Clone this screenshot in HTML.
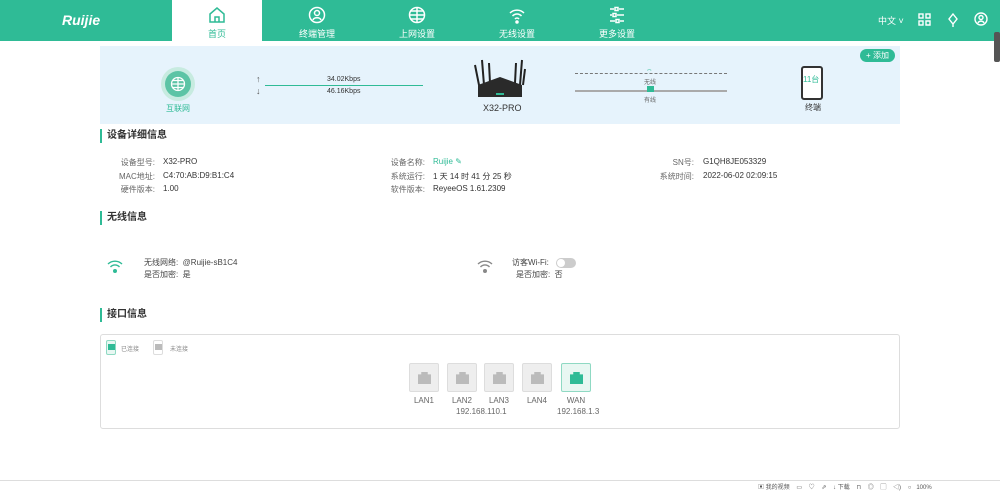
<!DOCTYPE html>
<html><head><meta charset="utf-8"><style>
*{margin:0;padding:0;box-sizing:border-box}
body{width:1000px;height:491px;overflow:hidden;background:#fff;font-family:"Liberation Sans","Noto Sans CJK SC",sans-serif;color:#333;position:relative;font-size:8px}
.a{position:absolute;white-space:nowrap}
.hdr{position:absolute;left:0;top:0;width:1000px;height:41px;background:#2fbb96}
.nav{position:absolute;top:0;width:90px;height:41px;color:#fff;text-align:center}
.nav.on{background:#fff;color:#2fbb96}
.nav svg{position:absolute;left:36px;top:6px}
.nav span{position:absolute;left:0;right:0;top:27px;font-size:9px}
.ttl{position:absolute;left:100px;height:14px;border-left:2px solid #2fbb96;padding-left:5px;font-size:10px;font-weight:bold;color:#333;line-height:14px}
.lb{color:#666;text-align:right;width:60px}
.v{color:#333}
.port{position:absolute;top:363px;width:30px;height:29px;border:1px solid #ddd;background:#eee;border-radius:2px}
.port i{position:absolute;left:8px;top:8px;width:13px;height:12px;background:#bbb;clip-path:polygon(25% 0,75% 0,75% 20%,100% 20%,100% 100%,0 100%,0 20%,25% 20%)}
.port.g{border-color:#8fd9c3;background:#e8f7f2}.port.g i{background:#2fbb96}
.pl{position:absolute;top:396px;font-size:8px;color:#666;width:40px;text-align:center}
</style></head><body>
<div class="hdr"></div>
<div class="a" style="left:62px;top:12px;color:#fff;font-size:14px;font-weight:bold;font-style:italic">Ruijie</div>
<div class="nav on" style="left:172px"><svg width="18" height="18" viewBox="0 0 18 18" fill="none" stroke="#2fbb96" stroke-width="1.5"><path d="M2 8L9 2l7 6v8H2z M7 16v-5h4v5"/></svg><span>首页</span></div>
<div class="nav" style="left:272px"><svg width="18" height="18" viewBox="0 0 18 18" fill="none" stroke="#fff" stroke-width="1.5"><circle cx="9" cy="9" r="7.5"/><circle cx="9" cy="7" r="2.5"/><path d="M5 14c1-3 7-3 8 0"/></svg><span>终端管理</span></div>
<div class="nav" style="left:372px"><svg width="18" height="18" viewBox="0 0 18 18" fill="none" stroke="#fff" stroke-width="1.5"><circle cx="9" cy="9" r="7.5"/><path d="M1.5 9h15M9 1.5v15M3 5h12M3 13h12"/></svg><span>上网设置</span></div>
<div class="nav" style="left:472px"><svg width="18" height="18" viewBox="0 0 18 18" fill="none" stroke="#fff" stroke-width="1.5"><path d="M2 7a10 10 0 0 1 14 0M4.5 10a6 6 0 0 1 9 0M7 13a2.5 2.5 0 0 1 4 0"/><circle cx="9" cy="16" r="1" fill="#fff"/></svg><span>无线设置</span></div>
<div class="nav" style="left:572px"><svg width="18" height="18" viewBox="0 0 18 18" fill="none" stroke="#fff" stroke-width="1.5"><path d="M2 3h4M11 3h5M2 9h2M9 9h7M2 15h5M12 15h4"/><rect x="7" y="1.5" width="3" height="3"/><rect x="5" y="7.5" width="3" height="3"/><rect x="8" y="13.5" width="3" height="3"/></svg><span>更多设置</span></div>
<div class="a" style="left:878px;top:14px;color:#fff;font-size:9px">中文 ˅</div>
<svg class="a" style="left:918px;top:13px" width="13" height="13" viewBox="0 0 13 13" fill="none" stroke="#fff" stroke-width="1.4"><rect x="1" y="1" width="4" height="4"/><rect x="8" y="1" width="4" height="4"/><rect x="1" y="8" width="4" height="4"/><path d="M8 8h4v4H8z"/></svg>
<svg class="a" style="left:947px;top:13px" width="12" height="14" viewBox="0 0 12 14" fill="none" stroke="#fff" stroke-width="1.4"><path d="M6 1l4 5-4 5-4-5zM6 11v3"/></svg>
<svg class="a" style="left:974px;top:12px" width="14" height="14" viewBox="0 0 14 14" fill="none" stroke="#fff" stroke-width="1.4"><circle cx="7" cy="7" r="6"/><circle cx="7" cy="5.5" r="2"/><path d="M4 11c1-2.5 5-2.5 6 0"/></svg>
<div class="a" style="left:994px;top:32px;width:6px;height:30px;background:#555;border-radius:2px"></div>

<div class="a" style="left:100px;top:46px;width:800px;height:78px;background:#e6f3fc"></div>
<div class="a" style="left:860px;top:49px;width:35px;height:13px;background:#2fbb96;border-radius:7px;color:#fff;font-size:8px;text-align:center;line-height:13px">+ 添加</div>
<div class="a" style="left:161px;top:67px;width:34px;height:34px;border-radius:50%;background:#c7ebe0"></div>
<div class="a" style="left:165px;top:71px;width:26px;height:26px;border-radius:50%;background:#5cc4a5"></div>
<svg class="a" style="left:170px;top:76px" width="16" height="16" viewBox="0 0 16 16" fill="none" stroke="#fff" stroke-width="1.3"><circle cx="8" cy="8" r="6.5"/><path d="M1.5 8h13M8 1.5v13M3 4.5h10M3 11.5h10"/></svg>
<div class="a" style="left:166px;top:103px;color:#2fbb96;font-size:8px">互联网</div>
<div class="a" style="left:256px;top:74px;font-size:9px;color:#555">↑</div>
<div class="a" style="left:256px;top:86px;font-size:9px;color:#555">↓</div>
<div class="a" style="left:327px;top:76px;font-size:7px">34.02Kbps</div>
<div class="a" style="left:265px;top:85px;width:158px;height:1px;background:#2fbb96"></div>
<div class="a" style="left:327px;top:88px;font-size:7px">46.16Kbps</div>
<svg class="a" style="left:472px;top:55px" width="56" height="45" viewBox="0 0 56 45"><path d="M3 10l4 20M10 5l2 25M17 8l1 20M44 8l-1 20M50 5l-2 25M53 14l-2 16" stroke="#222" stroke-width="2"/><path d="M6 30l22-8 22 8v12H6z" fill="#2a2a2a"/><rect x="24" y="38" width="8" height="2" fill="#2fbb96"/></svg>
<div class="a" style="left:483px;top:103px;font-size:9px">X32-PRO</div>
<div class="a" style="left:575px;top:73px;width:152px;border-top:1px dashed #777"></div>
<div class="a" style="left:646px;top:68px;color:#2fbb96;font-size:7px">⌔</div>
<div class="a" style="left:644px;top:77px;font-size:6px;color:#666">无线</div>
<div class="a" style="left:575px;top:90px;width:152px;height:2px;background:#aaa"></div>
<div class="a" style="left:647px;top:86px;width:7px;height:6px;background:#2fbb96"></div>
<div class="a" style="left:644px;top:95px;font-size:6px;color:#666">有线</div>
<div class="a" style="left:801px;top:66px;width:22px;height:34px;border:2.5px solid #333;border-radius:3px;background:#fff"></div>
<div class="a" style="left:803px;top:74px;font-size:8px;color:#2fbb96">11台</div>
<div class="a" style="left:805px;top:102px;font-size:8px">终端</div>

<div class="ttl" style="top:129px">设备详细信息</div>
<div class="a lb" style="left:95px;top:157px">设备型号:</div><div class="a v" style="left:163px;top:157px">X32-PRO</div>
<div class="a lb" style="left:95px;top:171px">MAC地址:</div><div class="a v" style="left:163px;top:171px">C4:70:AB:D9:B1:C4</div>
<div class="a lb" style="left:95px;top:184px">硬件版本:</div><div class="a v" style="left:163px;top:184px">1.00</div>
<div class="a lb" style="left:365px;top:157px">设备名称:</div><div class="a v" style="left:433px;top:157px;color:#2fbb96">Ruijie ✎</div>
<div class="a lb" style="left:365px;top:171px">系统运行:</div><div class="a v" style="left:433px;top:171px">1 天 14 时 41 分 25 秒</div>
<div class="a lb" style="left:365px;top:184px">软件版本:</div><div class="a v" style="left:433px;top:184px">ReyeeOS 1.61.2309</div>
<div class="a lb" style="left:634px;top:157px">SN号:</div><div class="a v" style="left:703px;top:157px">G1QH8JE053329</div>
<div class="a lb" style="left:634px;top:171px">系统时间:</div><div class="a v" style="left:703px;top:171px">2022-06-02 02:09:15</div>

<div class="ttl" style="top:211px">无线信息</div>
<svg class="a" style="left:107px;top:259px" width="16" height="14" viewBox="0 0 16 14" fill="none" stroke="#2fbb96" stroke-width="1.4"><path d="M1 5a10 10 0 0 1 14 0M3.5 8a6 6 0 0 1 9 0"/><circle cx="8" cy="12" r="1.3" fill="#2fbb96"/></svg>
<div class="a" style="left:144px;top:257px;color:#444">无线网络:&nbsp; @Ruijie-sB1C4</div>
<div class="a" style="left:144px;top:269px;color:#444">是否加密:&nbsp; 是</div>
<svg class="a" style="left:477px;top:259px" width="16" height="14" viewBox="0 0 16 14" fill="none" stroke="#888" stroke-width="1.4"><path d="M1 5a10 10 0 0 1 14 0M3.5 8a6 6 0 0 1 9 0"/><circle cx="8" cy="12" r="1.3" fill="#888"/></svg>
<div class="a" style="left:512px;top:257px;color:#444">访客Wi-Fi:</div>
<div class="a" style="left:556px;top:258px;width:20px;height:10px;border-radius:5px;background:#ccc"><div style="margin:1px;width:8px;height:8px;border-radius:50%;background:#fff"></div></div>
<div class="a" style="left:516px;top:269px;color:#444">是否加密:&nbsp; 否</div>

<div class="ttl" style="top:308px">接口信息</div>
<div class="a" style="left:100px;top:334px;width:800px;height:95px;border:1px solid #ddd;border-radius:3px"></div>
<div class="port g" style="left:106px;top:340px;width:10px;height:15px"></div>
<div class="a" style="left:108px;top:344px;width:7px;height:6px;background:#2fbb96"></div>
<div class="a" style="left:121px;top:344px;font-size:6px;color:#888">已连接</div>
<div class="port" style="left:153px;top:340px;width:10px;height:15px;background:#fff"></div>
<div class="a" style="left:155px;top:344px;width:7px;height:6px;background:#bbb"></div>
<div class="a" style="left:170px;top:344px;font-size:6px;color:#888">未连接</div>
<div class="port" style="left:409px"><i></i></div>
<div class="port" style="left:447px"><i></i></div>
<div class="port" style="left:484px"><i></i></div>
<div class="port" style="left:522px"><i></i></div>
<div class="port g" style="left:561px"><i></i></div>
<div class="pl" style="left:404px">LAN1</div>
<div class="pl" style="left:442px">LAN2</div>
<div class="pl" style="left:479px">LAN3</div>
<div class="pl" style="left:517px">LAN4</div>
<div class="pl" style="left:556px">WAN</div>
<div class="a" style="left:456px;top:407px;color:#666">192.168.110.1</div>
<div class="a" style="left:557px;top:407px;color:#666">192.168.1.3</div>

<div class="a" style="left:0;top:480px;width:1000px;height:11px;border-top:1px solid #ddd;background:#fff"></div>
<div class="a" style="left:758px;top:482px;font-size:6px;color:#555">▣ 我的视频 &nbsp;&nbsp; ▭ &nbsp;&nbsp; ♡ &nbsp;&nbsp; ⇗ &nbsp;&nbsp; ↓ 下载 &nbsp;&nbsp; ⊓ &nbsp;&nbsp; ◎ &nbsp;&nbsp; ▢ &nbsp;&nbsp; ◁) &nbsp;&nbsp; ○ &nbsp; 100%</div>
</body></html>
